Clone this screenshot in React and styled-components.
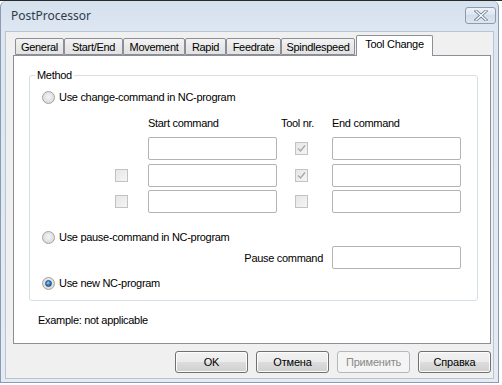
import React from "react";
import styled, { createGlobalStyle } from "styled-components";

const Global = createGlobalStyle`
  html, body { margin: 0; padding: 0; background: #ffffff; }
  body { font-family: "Liberation Sans", Arial, sans-serif; font-size: 11px; letter-spacing: -0.3px; color: #000; }
  * { box-sizing: border-box; }
`;

const Page = styled.div`
  width: 502px;
  height: 385px;
  overflow: hidden;
  border-top: 1px solid #2a2a2a;
  background: #ffffff;
`;

const Window = styled.div`
  width: 499px;
  height: 382px;
  border: 1px solid #8a9ab0;
  border-top: none;
  border-radius: 6px 6px 0 0;
  background: linear-gradient(#d5e1ee 0px, #dde6f1 28px, #e4ebf3 100%);
  display: flex;
  flex-direction: column;
`;

const TitleBar = styled.div`
  height: 30px;
  display: flex;
  align-items: center;
  justify-content: space-between;
  padding: 0 2px 0 10px;
`;

const Title = styled.span`
  font-family: "Noto Sans", "Open Sans", sans-serif;
  font-size: 12px;
  letter-spacing: 0;
  color: #2e3a48;
  margin-top: -1px;
`;

const CloseButton = styled.div`
  width: 31px;
  height: 17px;
  margin-top: -2px;
  border: 1px solid #8d9bb0;
  border-radius: 3px;
  background: linear-gradient(#eef3f9, #dbe4ef 50%, #d3dde9 50%, #dce5f0);
  display: flex;
  align-items: center;
  justify-content: center;
`;

const Client = styled.div`
  flex: 1;
  margin: 0 4px 3px 4px;
  border: 1px solid #b7c4d4;
  background: #f0f0f0;
  display: flex;
  flex-direction: column;
`;

const TabStrip = styled.div`
  height: 23px;
  display: flex;
  align-items: flex-end;
  padding-left: 9px;
`;

const Tab = styled.div`
  position: relative;
  width: ${(p) => p.$w}px;
  height: ${(p) => (p.$active ? 21 : 17)}px;
  margin-left: ${(p) => (p.$active ? 1 : 0)}px;
  margin-bottom: ${(p) => (p.$active ? -1 : 0)}px;
  z-index: ${(p) => (p.$active ? 2 : 1)};
  border: 1px solid #8c8f98;
  border-bottom: ${(p) => (p.$active ? "none" : "1px solid #8c8f98")};
  border-radius: 2px 2px 0 0;
  background: ${(p) => (p.$active ? "#ffffff" : "linear-gradient(#f3f3f3, #e9e9e9 50%, #e2e2e2 100%)")};
  display: flex;
  align-items: ${(p) => (p.$active ? "flex-start" : "center")};
  padding-top: ${(p) => (p.$active ? 2 : 0)}px;
  justify-content: center;
  font-size: 11px;
  color: #000;
  white-space: nowrap;
`;

const Panel = styled.div`
  margin: 0 2px 0 7px;
  height: 289px;
  border: 1px solid #8c8f98;
  background: #ffffff;
  padding: 19px 12px 0 15px;
`;

const GroupBox = styled.div`
  position: relative;
  border: 1px solid #d5dfe5;
  border-radius: 3px;
  padding: 15px 0 10px 12px;
`;

const GroupLabel = styled.span`
  position: absolute;
  top: -7px;
  left: 5px;
  padding: 0 2px;
  line-height: 13px;
  background: #ffffff;
`;

const RadioRow = styled.div`
  display: flex;
  align-items: center;
  gap: 4px;
  height: 13px;
  line-height: 13px;
  margin-top: ${(p) => p.$mt || 0}px;
`;

const RadioCircle = styled.span`
  width: 13px;
  height: 13px;
  border-radius: 50%;
  border: 1px solid #a2a2a2;
  background: radial-gradient(circle at 50% 45%, #f4f4f4 0%, #e2e2e2 55%, #cfcfcf 100%);
  display: flex;
  align-items: center;
  justify-content: center;
  flex: none;
`;

const RadioDot = styled.span`
  width: 7px;
  height: 7px;
  border-radius: 50%;
  background: radial-gradient(circle at 40% 35%, #9fd2f5 0%, #3a86c4 45%, #1c4f86 100%);
  border: 1px solid #1f4a78;
`;

const Grid = styled.div`
  display: grid;
  grid-template-columns: 13px 20px 129px 55px 129px;
  grid-template-rows: 21px 27px 26px 23px;
  margin: 12px 0 0 73px;
  align-items: start;
`;

const Header = styled.span`
  grid-column: ${(p) => p.$col};
  line-height: 14px;
  padding-left: ${(p) => p.$pl || 0}px;
  white-space: nowrap;
`;

const Cell = styled.div`
  grid-column: ${(p) => p.$col};
  height: 23px;
  display: flex;
  align-items: center;
  padding-left: ${(p) => p.$pl || 0}px;
`;

const CheckBox = styled.span`
  width: 13px;
  height: 13px;
  border: 1px solid #c2c2c2;
  background: linear-gradient(135deg, #e6e6e6, #f5f5f5);
  display: flex;
  align-items: center;
  justify-content: center;
  flex: none;
`;

const TextBox = styled.div`
  width: ${(p) => p.$w || 129}px;
  height: 23px;
  border: 1px solid #b3b3b3;
  border-radius: 2px;
  background: #ffffff;
`;

const PauseRow = styled.div`
  display: flex;
  align-items: center;
  margin-top: 2px;
  height: 23px;
`;

const PauseLabel = styled.span`
  width: 281px;
  text-align: right;
  margin-right: 9px;
  margin-top: 1px;
`;

const Example = styled.div`
  margin: 13px 0 0 9px;
  line-height: 13px;
`;

const ButtonRow = styled.div`
  display: flex;
  justify-content: flex-end;
  gap: 8px;
  margin-top: 7px;
  padding-right: 2px;
`;

const Button = styled.button`
  width: 73px;
  height: 22px;
  padding: 0;
  font-family: "Liberation Sans", Arial, sans-serif;
  font-size: 11px;
  letter-spacing: -0.2px;
  color: ${(p) => (p.disabled ? "#8a8a8a" : "#000")};
  border: 1px solid ${(p) => (p.disabled ? "#b5b8bb" : "#707070")};
  border-radius: 3px;
  background: ${(p) =>
    p.disabled
      ? "#f4f4f4"
      : "linear-gradient(#f2f2f2 0%, #ebebeb 50%, #dddddd 50%, #cfcfcf 100%)"};
  box-shadow: ${(p) => (p.disabled ? "none" : "inset 0 0 0 1px #fcfcfc")};
`;

const Check = () => (
  <svg width="9" height="9" viewBox="0 0 9 9">
    <path d="M1 4.5 L3.5 7 L8 1.5" fill="none" stroke="#a8a8a8" strokeWidth="1.4" />
  </svg>
);

const CloseGlyph = () => (
  <svg width="14" height="11" viewBox="0 0 14 11">
    <path d="M2 1 L12 10 M12 1 L2 10" stroke="#6c7a8e" strokeWidth="3" strokeLinecap="square" />
    <path d="M2 1 L12 10 M12 1 L2 10" stroke="#ffffff" strokeWidth="1.3" strokeLinecap="square" />
  </svg>
);

const tabs = [
  { label: "General", w: 49 },
  { label: "Start/End", w: 59 },
  { label: "Movement", w: 62 },
  { label: "Rapid", w: 41 },
  { label: "Feedrate", w: 55 },
  { label: "Spindlespeed", w: 74 },
  { label: "Tool Change", w: 77, active: true },
];

const rows = [
  { left: null, tool: true },
  { left: false, tool: true },
  { left: false, tool: false },
];

function Radio({ checked, label, mt }) {
  return (
    <RadioRow $mt={mt}>
      <RadioCircle>{checked && <RadioDot />}</RadioCircle>
      <span>{label}</span>
    </RadioRow>
  );
}

export default function App() {
  return (
    <>
      <Global />
      <Page>
        <Window>
          <TitleBar>
            <Title>PostProcessor</Title>
            <CloseButton>
              <CloseGlyph />
            </CloseButton>
          </TitleBar>
          <Client>
            <TabStrip>
              {tabs.map((t) => (
                <Tab key={t.label} $w={t.w} $active={t.active}>
                  {t.label}
                </Tab>
              ))}
            </TabStrip>
            <Panel>
              <GroupBox>
                <GroupLabel>Method</GroupLabel>
                <Radio label="Use change-command in NC-program" />
                <Grid>
                  <Header $col={3}>Start command</Header>
                  <Header $col={4} $pl={4}>Tool nr.</Header>
                  <Header $col={5}>End command</Header>
                  {rows.map((r, i) => (
                    <React.Fragment key={i}>
                      <Cell $col={1}>{r.left !== null && <CheckBox />}</Cell>
                      <Cell $col={3}>
                        <TextBox />
                      </Cell>
                      <Cell $col={4} $pl={18}>
                        <CheckBox>{r.tool && <Check />}</CheckBox>
                      </Cell>
                      <Cell $col={5}>
                        <TextBox />
                      </Cell>
                    </React.Fragment>
                  ))}
                </Grid>
                <Radio label="Use pause-command in NC-program" mt={18} />
                <PauseRow>
                  <PauseLabel>Pause command</PauseLabel>
                  <TextBox />
                </PauseRow>
                <Radio label="Use new NC-program" checked mt={8} />
              </GroupBox>
              <Example>Example: not applicable</Example>
            </Panel>
            <ButtonRow>
              <Button>OK</Button>
              <Button>Отмена</Button>
              <Button disabled>Применить</Button>
              <Button>Справка</Button>
            </ButtonRow>
          </Client>
        </Window>
      </Page>
    </>
  );
}
